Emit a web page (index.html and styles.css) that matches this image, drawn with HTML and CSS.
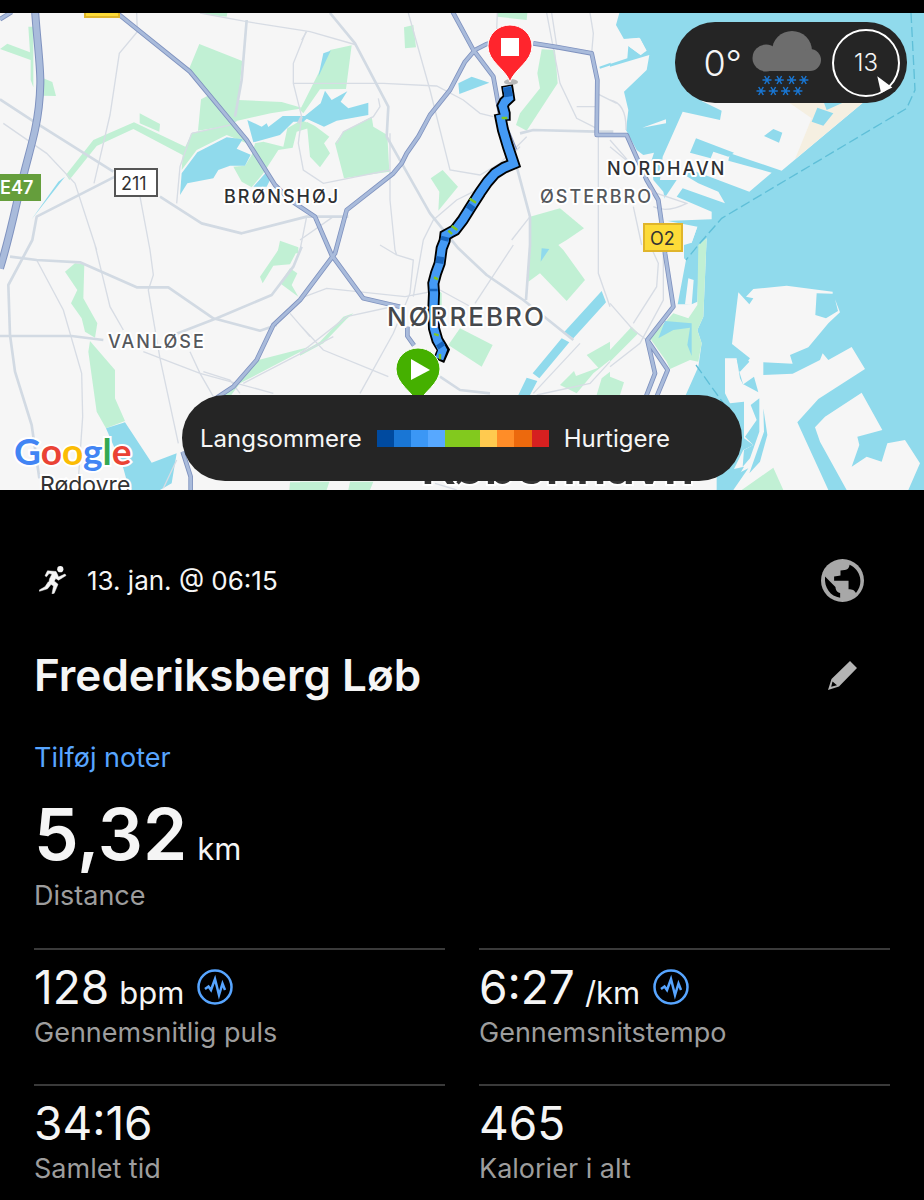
FILE: index.html
```html
<!DOCTYPE html>
<html lang="da">
<head>
<meta charset="utf-8">
<meta name="viewport" content="width=device-width, initial-scale=1">
<title>Frederiksberg Løb</title>
<link rel="stylesheet" href="styles.css">
</head>
<body>
<main class="activity">
  <section class="map" aria-label="Rutekort">
    <svg class="map-canvas" viewBox="0 13 924 477" preserveAspectRatio="xMidYMid slice" role="img" aria-label="Kort over ruten">
      <g transform="scale(.333333)">
        <rect class="land" y="30" width="2780" height="1450"/>
        <!-- sea and harbour -->
        <g transform="translate(1830 0)">
          <path class="water" d="M28 39L18 75L42 118L90 115L110 152L92 165L55 138L52 175L0 192V200L118 165L110 210L42 275L55 330L48 390L80 450L100 465L132 458L125 480L130 540L160 575L165 600L170 662L262 680L245 728L222 735V775L228 780L203 913H245L262 905L268 735L290 715L288 760L280 950L262 990L275 1030L265 1100L225 1190L320 1400V1475H950V30H28Z"/>
          <path class="land" d="M275 303L335 332L330 360L218 335L158 470L150 540L200 540L160 600L165 663L305 658V635L200 590L218 565L345 610L325 575L265 550L215 520L245 510L418 575L485 518L355 482L360 460L515 512L765 303ZM97 383L168 358V370ZM88 113L108 150L92 165L60 142L40 117ZM220 690L262 680L245 728L220 725ZM235 835L251 840L245 915L225 913Z"/>
          <path class="sand" d="M530 303H765L555 478L605 355Z"/>
          <path class="water" d="M258 415L372 458L355 470L310 455L302 475L240 458ZM462 408L490 387L517 398L507 428ZM622 323L670 340L640 377L605 365ZM640 303H710L650 330Z"/>
          <path class="park" d="M265 735L290 715L288 760L280 950L262 990L275 1030L265 1085L240 1080L180 1107L170 1085L120 1015L190 940L235 955L262 915Z"/>
          <path class="water" d="M165 963L245 970V1068L232 1035L240 983L190 990L145 1015Z"/>
        </g>
        <g transform="translate(1830 735)">
          <path class="land" d="M385 142L418 178L430 160L408 155L430 132L530 122L668 140V146L620 145L616 210L648 220L684 198L675 163L690 202L655 235L595 307L540 330L548 356L460 352V390L548 386L630 345L638 325L655 345L725 306L765 372L625 462L562 532L655 735H362L402 665L372 672L400 615L430 600L402 580V470L360 475L345 445V340H380L390 400L400 420L388 380L420 340L366 297Z"/>
          <path class="land" d="M755 443L817 555L742 575L748 600L725 665L770 635L815 650L832 595L885 585L930 655L895 735H710L630 590L615 547L645 515Z"/>
          <path class="water" d="M400 418L432 395L445 442ZM422 480L448 460V560L420 640L398 665L402 615L430 600L405 575L440 525ZM460 490L472 570L450 650L418 685L462 560ZM380 342L390 380L418 350L400 330ZM375 690L415 670L370 735H320Z"/>
          <path class="park" d="M395 735L490 668L520 735ZM0 315L65 245L85 265L0 350ZM0 395L42 412L30 450H0Z"/>
          <path class="ferry" d="M258 360L340 475"/>
        </g>
        <path class="ferry" d="M2733 39L2745 270L2720 325L2165 655L2095 735L2058 780"/>
        <!-- north-west -->
        <path class="park" d="M85 80H100V262L92 240V180L0 147L22 131L90 157ZM130 235L157 246L168 288L130 287ZM598 132L727 183L715 300L845 306L910 325L812 340L712 362L690 378L640 385L594 392L603 298L628 285L568 205ZM419 340L480 372L478 395L419 370ZM402 367L556 440L576 398L710 372L740 430L680 405L590 450L545 510L548 465L400 387L290 438L208 540L198 524L280 420ZM700 500L735 497L755 465L765 430L790 425L850 440L862 385L905 360L925 370V385L890 395L878 443L835 450L790 520L755 562L725 545ZM840 722L895 742V760H832ZM600 39H682L680 50L640 46Z"/>
        <path class="water" d="M540 585L545 520L592 457L680 412L728 418L710 446L752 464L735 497H690L655 510L640 535L562 550ZM742 360L785 380L800 370L805 381L848 348H930L910 365H880L840 405L760 427ZM760 560L800 515L810 540L800 560ZM195 530L95 658L175 545Z"/>
        <!-- north centre -->
        <g transform="translate(900 0)">
          <path class="park" d="M90 150L155 136L138 267L60 268L10 340L0 330L50 230ZM20 365L45 378L88 410L72 430L90 460L60 502L30 470ZM105 430L130 395L215 350L220 380L262 405L268 515L132 535ZM312 82L340 75L348 142L315 145ZM592 39H682L680 60L592 50ZM725 148L765 150L773 250L740 300L680 392L648 375L660 340L720 265L712 220ZM392 535L428 510L474 560L415 632L418 575ZM690 650L780 625L852 685L800 720L775 735L790 750L855 840L800 903L720 820L685 845Z"/>
          <path class="water" d="M70 160L92 152L55 230ZM10 352L62 310L75 272L95 300L142 274L122 305L145 325L205 308V345L110 362L72 380ZM475 250L515 230L568 248L478 282ZM898 200L932 188V196L900 206ZM725 745L748 747L722 785Z"/>
        </g>
        <!-- south-west -->
        <g transform="translate(0 735)">
          <path class="park" d="M195 80L225 55L253 58L250 160L292 235L285 278L255 260L245 220L213 175L232 135ZM270 288L345 375V460L375 528L318 550L290 500L265 320ZM845 0L895 10L870 58L820 62L788 115L780 95ZM870 70L892 85L875 120L895 155L840 115ZM775 345L930 305L720 415L690 455L672 452ZM870 712H930V735H868Z"/>
          <path class="water" d="M318 550L375 532L455 653L530 625L515 715L480 735H388L370 670Z"/>
        </g>
        <!-- south centre -->
        <g transform="translate(900 735)">
          <path class="park" d="M445 300L480 250L578 300L545 365ZM860 330L930 290V345L880 385L830 445L780 420L822 378L828 393L895 368ZM930 380L905 400L890 450H930ZM0 710H88L80 735H0ZM150 710H220L210 735H145ZM415 135L425 145V185H415ZM0 325L60 290L130 215L160 205L140 222L70 295L0 332Z"/>
          <path class="water" d="M905 138L918 172L820 280L792 262ZM785 280L808 292L718 400L698 385ZM680 398L712 408L690 450H655Z"/>
        </g>
        <!-- local streets -->
        <g class="street">
          <path d="M410 39L412 95L358 160L330 345L282 550M600 39L740 65L930 95L1070 135M918 95L880 190V250L905 350L895 430L910 510L970 550L1170 510M880 250H1150L1310 258L1390 300L1440 340L1480 350M575 400L540 500L530 610M575 400L690 375M10 370L140 460L225 550L290 750M420 590L450 750L460 825L445 870L480 1075L535 1330M110 780L190 930L245 1120L248 1250L235 1440M285 735L330 920L370 990M430 1055L600 1120L820 1180M920 650L900 750M570 1055L600 1120L640 1190M610 1115L690 1140L720 1180"/>
          <path d="M1225 39L1290 270L1350 510L1440 525L1500 490L1580 410M1010 430L1030 395L1120 350L1140 320L1135 295M1170 400V600L1185 750L1190 765M1640 39L1680 250L1730 355L1790 385M1655 39L1672 150M1770 39L1780 100L1775 160M1590 650L1535 720M1540 735L1425 910M1560 440L1450 560L1370 600L1300 660L1270 720L1240 890M1795 405V820L1830 920M900 895L980 865L1215 890L1320 870M1320 870L1430 930M900 975L970 1050L1165 1130M1230 880L1180 1000L1080 1180M900 1060L1040 950L1200 915M1140 735L1190 765L1240 780L1230 880M730 1150L1000 1010M870 940L930 1010M1492 39L1490 90M1000 650L900 720M905 120L920 95M1730 320H1790M1790 280L1850 310M1830 910L1900 990L1940 1020M1830 1100L1920 1030L1990 900V760M1950 735L1975 790L1970 860L1900 970M1830 300Q1880 310 1878 390M1940 570L2060 610Q2000 640 1960 620M1830 420L1900 500M1830 440L1890 490M1900 620L1925 735M1830 1085L1770 1150L1610 1185M1740 1030L1600 1180M530 1380L490 1465M1305 1450L1370 1470M2100 1400H2160"/>
        </g>
        <g class="avenue">
          <path d="M0 298L110 370L340 515M345 530L110 650L97 720L25 855L30 1005L45 1115L95 1275L118 1435M480 590L605 670L725 700L920 650L1045 650M30 770L110 780L240 787L410 862H505L640 955L780 992L830 975M0 1008H215L310 1020M520 1005L650 955L815 885L880 800L905 740M740 60L725 240L705 350M990 39L1065 130L1165 320L1160 410L1290 640L1375 745L1460 825L1570 900L1720 1020M1560 400L1600 390L1790 395H1840M1550 500L1590 650V735L1578 900M1320 1130L1380 1170L1470 1180M905 350L895 370"/>
        </g>
        <!-- motorways -->
        <g class="motorway-edge">
          <path class="wide" d="M105 30C112 130 122 200 121 250S118 330 105 390S75 500 50 610S20 740 0 805"/>
          <path d="M0 58L35 36M340 30L570 215L740 420L825 555L870 600L945 650L995 765L1090 895L1200 920M1222 980V1008L1242 1036M1355 30L1420 150L1480 230L1500 340L1545 450M1500 125L1460 132L1425 150L1395 185L1350 270L1290 345L1255 410L1220 460L1205 490L1180 520L1040 630L1005 760L900 900L820 975L770 1080L700 1160L640 1200M548 1355L572 1430V1475M1600 130L1675 142L1775 160L1792 240L1790 405H1880L1940 540L1975 600L1985 670L1995 760L2020 920L1942 1020L1965 1120L1938 1190M1942 1020L2003 1110L1970 1190"/>
        </g>
        <g class="motorway">
          <path class="wide" d="M105 30C112 130 122 200 121 250S118 330 105 390S75 500 50 610S20 740 0 805"/>
          <path d="M0 58L35 36M340 30L570 215L740 420L825 555L870 600L945 650L995 765L1090 895L1200 920M1222 980V1008L1242 1036M1355 30L1420 150L1480 230L1500 340L1545 450M1500 125L1460 132L1425 150L1395 185L1350 270L1290 345L1255 410L1220 460L1205 490L1180 520L1040 630L1005 760L900 900L820 975L770 1080L700 1160L640 1200M548 1355L572 1430V1475M1600 130L1675 142L1775 160L1792 240L1790 405H1880L1940 540L1975 600L1985 670L1995 760L2020 920L1942 1020L1965 1120L1938 1190M1942 1020L2003 1110L1970 1190"/>
        </g>
        <!-- run -->
        <path class="route-edge" d="M1521 256L1524 275L1527 294L1514 306L1508 318L1514 340L1514 362M1499 340L1509 390L1524 440L1541 491L1512 503L1485 520L1463 545L1440 578L1412 622L1388 660L1365 690L1350 698L1336 706L1334 722L1325 745L1319 790L1308 820L1300 850L1302 880L1300 930L1302 985L1312 1020L1330 1050L1316 1082"/>
        <path class="route" d="M1521 260L1524 275L1527 294L1514 306L1508 318L1514 340L1514 358M1500 344L1509 390L1524 440L1541 491L1512 503L1485 520L1463 545L1440 578L1412 622L1388 660L1365 690L1350 698L1336 706L1334 722L1325 745L1319 790L1308 820L1300 850L1302 880L1300 930L1302 985L1312 1020L1328 1050L1318 1076"/>
        <path class="route-slow" d="M1521 262L1526 290M1417 615L1407 629M1321 770L1318 790M1336 710L1333 722M1301 866L1301 874M1318 1030L1326 1042"/>
        <path class="route-fast" d="M1409 596L1428 608M1505 354H1522M1355 678L1372 690M1345 692L1356 702M1302 832L1314 838M1302 1002L1316 1006M1320 1062V1078"/>
      </g>
      <g class="labels">
        <text class="place dark" x="224" y="203">BRØNSHØJ</text>
        <text class="place dark" x="607" y="175">NORDHAVN</text>
        <text class="place" x="540" y="203">ØSTERBRO</text>
        <text class="place" x="108" y="348">VANLØSE</text>
        <text class="place district" x="387" y="326">NØRREBRO</text>
        <text class="town" x="40" y="493">Rødovre</text>
        <text class="city" x="421" y="484">København</text>
        <rect x="0" y="174" width="41" height="27" fill="#659e3c"/>
        <text class="shield" x="0" y="194" fill="#fff">E47</text>
        <rect x="115" y="169" width="42" height="27" fill="#fff" stroke="#555" stroke-width="2"/>
        <text class="shield thin" x="121" y="190" fill="#333">211</text>
        <rect x="644" y="224" width="38" height="27" fill="#fddb38" stroke="#e0b52b" stroke-width="2"/>
        <text class="shield thin" x="650" y="245" fill="#333">O2</text>
        <rect x="85" y="0" width="34" height="17" fill="#fddb38" stroke="#e0b52b" stroke-width="2"/>
        <text class="google" x="14" y="465"><tspan fill="#4285f4">G</tspan><tspan fill="#ea4335">o</tspan><tspan fill="#fbbc05">o</tspan><tspan fill="#4285f4">g</tspan><tspan fill="#34a853">l</tspan><tspan fill="#ea4335">e</tspan></text>
      </g>
      <ellipse cx="511" cy="82" rx="7" ry="3" fill="#000" opacity=".25"/>
      <path d="M510 82C505 68 488 62 488 46A22 21 0 0 1 532 46C532 62 515 68 510 82Z" fill="#ff252d" stroke="#fff" stroke-width="1"/>
      <rect x="501" y="38" width="18" height="18" fill="#fff"/>
      <path d="M418 404C413 392 396 384 396 369A22 21 0 0 1 440 369C440 384 423 392 418 404Z" fill="#45b000" stroke="#fff" stroke-width="1"/>
      <path d="M411 359V380L430 370Z" fill="#fff"/>
    </svg>

    <div class="weather">
      <span class="temp">0°</span>
      <svg class="cloud" viewBox="0 0 70 68" aria-hidden="true">
        <g fill="#6d6d6d"><circle cx="14" cy="29" r="13.500"/><circle cx="40" cy="22" r="20"/><circle cx="58" cy="31" r="11"/><path d="M14 22H58V42H14Z"/></g>
        <g stroke="#1976d2" stroke-width="1.500">
          <path id="flake" d="M10.500 51H19.500M12.700 47L17.300 55M17.300 47L12.700 55"/>
          <use href="#flake" x="12.300"/><use href="#flake" x="24.600"/><use href="#flake" x="36.900"/>
          <use href="#flake" x="-6" y="11"/><use href="#flake" x="6.300" y="11"/><use href="#flake" x="18.600" y="11"/><use href="#flake" x="30.900" y="11"/>
        </g>
      </svg>
      <span class="wind">13
        <svg class="wind-arrow" viewBox="0 0 68 68" aria-hidden="true"><path d="M46 48L62 60L50 66Z" fill="#fff"/></svg>
      </span>
    </div>

    <div class="legend">
      <span>Langsommere</span>
      <span class="scale" aria-hidden="true"><i class="s1"></i><i class="s2"></i><i class="s3"></i><i class="s4"></i><i class="s5"></i><i class="s5"></i><i class="s6"></i><i class="s7"></i><i class="s8"></i><i class="s9"></i></span>
      <span>Hurtigere</span>
    </div>
  </section>

  <section class="details">
    <div class="row meta">
      <svg class="runner" viewBox="0 0 28 28" aria-hidden="true">
        <circle cx="21.300" cy="3.200" r="3.100" fill="#f5f5f5"/>
        <path d="M8.500 4.800L17 5.500L18.500 8.500L19.500 11L26 8L27 9.600L19.500 14.200L16.800 12.500L15.200 15L19 18.300L15.200 27.300L13 27.800L14.500 20L9.800 16.800L10.500 13L13 8L10 7.600L7.500 10.800L6 9.800ZM9.300 15.800L12 18.500L8.500 22.800L.500 25.300L.300 24L6 20.800Z" fill="#f5f5f5" stroke="#f5f5f5" stroke-width=".5" stroke-linejoin="round"/>
      </svg>
      <time class="date" datetime="01-13T06:15">13. jan. @ 06:15</time>
      <button class="icon-button" type="button" aria-label="Synlighed">
        <svg class="globe" viewBox="0 0 128 128"><circle cx="64" cy="64" r="64" fill="#a8a8a8"/><path d="M12 52L43 83C44 94 48 98 57 101V115C28 111 9 86 12 52ZM85 17C83 31 77 33 58 34V49Q50 50 39 52V65H82V90C94 90 99 93 104 101C128 74 119 32 85 17Z" fill="#000"/></svg>
      </button>
    </div>
    <div class="row heading">
      <h1>Frederiksberg Løb</h1>
      <button class="icon-button" type="button" aria-label="Rediger navn">
        <svg class="pencil" viewBox="0 0 29 29"><path fill="#b4b4b4" fill-rule="evenodd" d="M22 0L29 7L11 25.500L0 29L3.500 18ZM4.500 20.500L3.200 25.800L9 24.200Z"/></svg>
      </button>
    </div>
    <a class="notes" href="#noter">Tilføj noter</a>

    <dl class="stats">
      <div class="stat main">
        <dd><span class="value">5,32</span><span class="unit">km</span></dd>
        <dt>Distance</dt>
      </div>
      <div class="stat">
        <dd><span class="value">128</span><span class="unit">bpm</span>
          <svg class="pulse" viewBox="0 0 36 36" aria-hidden="true"><circle cx="18" cy="18" r="16.500"/><path d="M8 20L11.500 17.500L14 21L18 10L22 26L25.500 14.500L28 21"/></svg></dd>
        <dt>Gennemsnitlig puls</dt>
      </div>
      <div class="stat">
        <dd><span class="value">6:27</span><span class="unit">/km</span>
          <svg class="pulse" viewBox="0 0 36 36" aria-hidden="true"><circle cx="18" cy="18" r="16.500"/><path d="M8 20L11.500 17.500L14 21L18 10L22 26L25.500 14.500L28 21"/></svg></dd>
        <dt>Gennemsnitstempo</dt>
      </div>
      <div class="stat">
        <dd><span class="value">34:16</span></dd>
        <dt>Samlet tid</dt>
      </div>
      <div class="stat">
        <dd><span class="value">465</span></dd>
        <dt>Kalorier i alt</dt>
      </div>
    </dl>
  </section>
</main>
</body>
</html>
```
FILE: styles.css
```css
* { box-sizing: border-box; }
body {
  margin: 0;
  background: #000;
  color: #f5f5f5;
  font-family: Inter, "Liberation Sans", sans-serif;
}
.activity { padding-top: 13px; overflow: hidden; }

/* Map */
.map { position: relative; overflow: hidden; }
.map-canvas { display: block; width: 100%; aspect-ratio: 924 / 477; }
.land { fill: #f6f6f6; }
.water { fill: #90daec; }
.park { fill: #c1f0d4; }
.sand { fill: #f5efe1; }
.ferry { fill: none; stroke: #5fbfd8; stroke-width: 4; stroke-dasharray: 30 12; }
.street { fill: none; stroke: #d7dce4; stroke-width: 4; }
.avenue { fill: none; stroke: #d2dae3; stroke-width: 8; stroke-linejoin: round; }
.motorway-edge { fill: none; stroke: #7f92bf; stroke-width: 14; stroke-linejoin: round; }
.motorway { fill: none; stroke: #a9bbdb; stroke-width: 9; stroke-linejoin: round; }
.motorway-edge .wide { stroke-width: 24; }
.motorway .wide { stroke-width: 18; }
.route-edge { fill: none; stroke: #000; stroke-width: 36; }
.route { fill: none; stroke: #449af5; stroke-width: 25; }
.route-slow { fill: none; stroke: #1765bd; stroke-width: 24; }
.route-fast { fill: none; stroke: #7fc822; stroke-width: 7; }
.place {
  font-size: 18px;
  font-weight: 500;
  letter-spacing: 2px;
  fill: #55585c;
  stroke: #fff;
  stroke-width: 4px;
  stroke-linejoin: round;
  paint-order: stroke;
}
.dark { fill: #2e3033; }
.district { font-size: 26px; fill: #45484c; }
.town, .city { fill: #333; stroke: #fff; stroke-width: 4px; paint-order: stroke; }
.town { font-size: 23px; }
.city { font-size: 50px; font-weight: 600; }
.shield { font-size: 18px; font-weight: 600; }
.thin { font-weight: 400; }
.google {
  font-family: Lato, sans-serif;
  font-size: 37px;
  font-weight: 700;
  stroke: #fff;
  stroke-width: 4px;
  paint-order: stroke;
}

.weather, .legend {
  position: absolute;
  display: flex;
  align-items: center;
  background: #252525;
}
.weather {
  top: 9px;
  right: 17px;
  height: 81px;
  padding: 0 7px 0 28px;
  gap: 10px;
  border-radius: 40px;
}
.temp { font-size: 36px; font-weight: 300; }
.cloud { width: 70px; height: 68px; }
.wind {
  position: relative;
  display: grid;
  place-items: center;
  width: 68px;
  height: 68px;
  border: 2px solid #fff;
  border-radius: 50%;
  font-size: 24px;
  font-weight: 300;
}
.wind-arrow { position: absolute; inset: 0; }
.legend {
  bottom: 9px;
  left: 50%;
  transform: translateX(-50%);
  width: 560px;
  max-width: 100%;
  height: 86px;
  padding: 0 18px;
  gap: 15px;
  border-radius: 43px;
  font-size: 24px;
}
.scale { display: flex; width: 172px; height: 17px; }
.scale i { flex: 1; }
.s1 { background: #004a9f; }
.s2 { background: #1976d5; }
.s3 { background: #3b97f5; }
.s4 { background: #57a8ff; }
.s5 { background: #82c91e; }
.s6 { background: #ffca4f; }
.s7 { background: #ff8d28; }
.s8 { background: #ec690d; }
.s9 { background: #d62020; }

/* Activity details */
.details { padding: 68px 34px 0; }
.row { display: flex; align-items: center; padding-right: 26px; }
.icon-button {
  display: grid;
  place-items: center;
  width: 43px;
  height: 43px;
  margin-left: auto;
  padding: 0;
  border: 0;
  background: none;
}
.globe { width: 43px; height: 43px; }
.pencil { width: 29px; height: 29px; }
.meta { height: 44px; }
.runner { width: 28px; height: 28px; margin: 0 20px 0 5px; }
.date { font-size: 26px; }
.heading { margin-top: 45px; }
h1 { margin: 0; font-size: 44px; line-height: 56px; font-weight: 600; }
.notes {
  display: inline-block;
  margin-top: 39px;
  color: #57a5ff;
  font-size: 27px;
  line-height: 32px;
  text-decoration: none;
}
.stats {
  display: grid;
  grid-template-columns: 1fr 1fr;
  column-gap: 34px;
  margin: 18px 0 0;
}
.stat {
  display: flex;
  flex-direction: column;
  gap: 2px;
  padding: 9px 0 35px;
  border-top: 2px solid #3a3a3a;
}
.stat.main {
  grid-column: 1 / -1;
  gap: 4px;
  padding: 0 0 36px;
  border-top: 0;
}
.stat dd { display: flex; align-items: baseline; margin: 0; }
.value { font-size: 46px; line-height: 56px; }
.main .value { font-size: 71px; line-height: 84px; font-weight: 600; }
.unit { margin-left: 10px; font-size: 31px; line-height: 40px; }
.stat dt { color: #9d9d9d; font-size: 27px; line-height: 32px; }
.pulse {
  align-self: center;
  width: 36px;
  height: 36px;
  margin-left: 13px;
  fill: none;
  stroke: #57a5ff;
  stroke-width: 2.500;
}
```
